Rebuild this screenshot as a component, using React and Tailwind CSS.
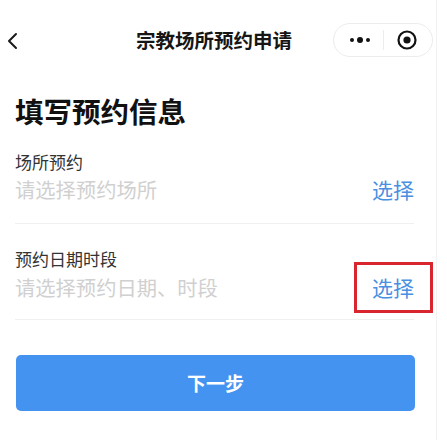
import React from "react";

const font = { fontFamily: '"Noto Sans CJK SC", "Noto Sans", sans-serif' };

export default function App() {
  return (
    <div className="w-[447px] h-[440px] bg-white overflow-hidden flex" style={font}>
      <div className="w-[437px] border-r border-[#f2f2f2] flex flex-col">
        {/* nav bar */}
        <div className="mt-[23px] h-[34px] flex items-center relative">
          <svg className="absolute left-[6px] top-[9px]" width="14" height="18" viewBox="0 0 14 18">
            <path d="M10 2 L3 9 L10 16" fill="none" stroke="#1a1a1a" strokeWidth="2" strokeLinecap="round" strokeLinejoin="round" />
          </svg>
          <div className="absolute left-[136px] top-0 h-[34px] flex items-center text-[19.5px] leading-none font-bold text-[#161616]">
            宗教场所预约申请
          </div>
          <div className="absolute left-[333px] top-0 w-[100px] h-[34px] rounded-full border border-[#ececec] bg-white flex items-center">
            <div className="w-[49px] flex items-center justify-center gap-[3px] pl-[2px]">
              <span className="w-[4px] h-[4px] rounded-full bg-[#111]" />
              <span className="w-[6px] h-[6px] rounded-full bg-[#111]" />
              <span className="w-[4px] h-[4px] rounded-full bg-[#111]" />
            </div>
            <div className="w-px h-[20px] bg-[#ececec]" />
            <div className="flex-1 flex items-center justify-center pr-[2px]">
              <svg width="22" height="22" viewBox="0 0 22 22">
                <circle cx="11" cy="11" r="8.5" fill="none" stroke="#111" strokeWidth="2.2" />
                <circle cx="11" cy="11" r="3.6" fill="#111" />
              </svg>
            </div>
          </div>
        </div>

        {/* content */}
        <div className="pl-[15px] pr-[22px]">
          <div className="mt-[37px] text-[28.5px] leading-[34px] font-bold text-[#111]">填写预约信息</div>

          <div className="mt-[23px] pb-[20px] border-b border-[#f0f0f0]">
            <div className="text-[17px] leading-[22px] text-[#333]">场所预约</div>
            <div className="mt-[2px] flex items-center justify-between h-[28px]">
              <span className="text-[20.3px] leading-[28px] text-[#d0d0d0]">请选择预约场所</span>
              <span className="text-[21px] leading-[28px] text-[#4a90e2]">选择</span>
            </div>
          </div>

          <div className="mt-[24px] pb-[18px] border-b border-[#f0f0f0]">
            <div className="text-[17px] leading-[22px] text-[#333]">预约日期时段</div>
            <div className="mt-[3px] flex items-center justify-between h-[28px] relative">
              <span className="text-[20.3px] leading-[28px] text-[#d0d0d0]">请选择预约日期、时段</span>
              <span className="text-[21px] leading-[28px] text-[#4a90e2]">选择</span>
              <div className="absolute left-[339px] top-[-11px] w-[79px] h-[51px] border-[3px] border-[#d9262e]" />
            </div>
          </div>

          <button className="mt-[35px] ml-[1px] w-[399px] h-[56px] rounded-[5px] bg-[#4493f1] text-white text-[19px] font-bold flex items-center justify-center">
            下一步
          </button>
        </div>
      </div>
    </div>
  );
}
